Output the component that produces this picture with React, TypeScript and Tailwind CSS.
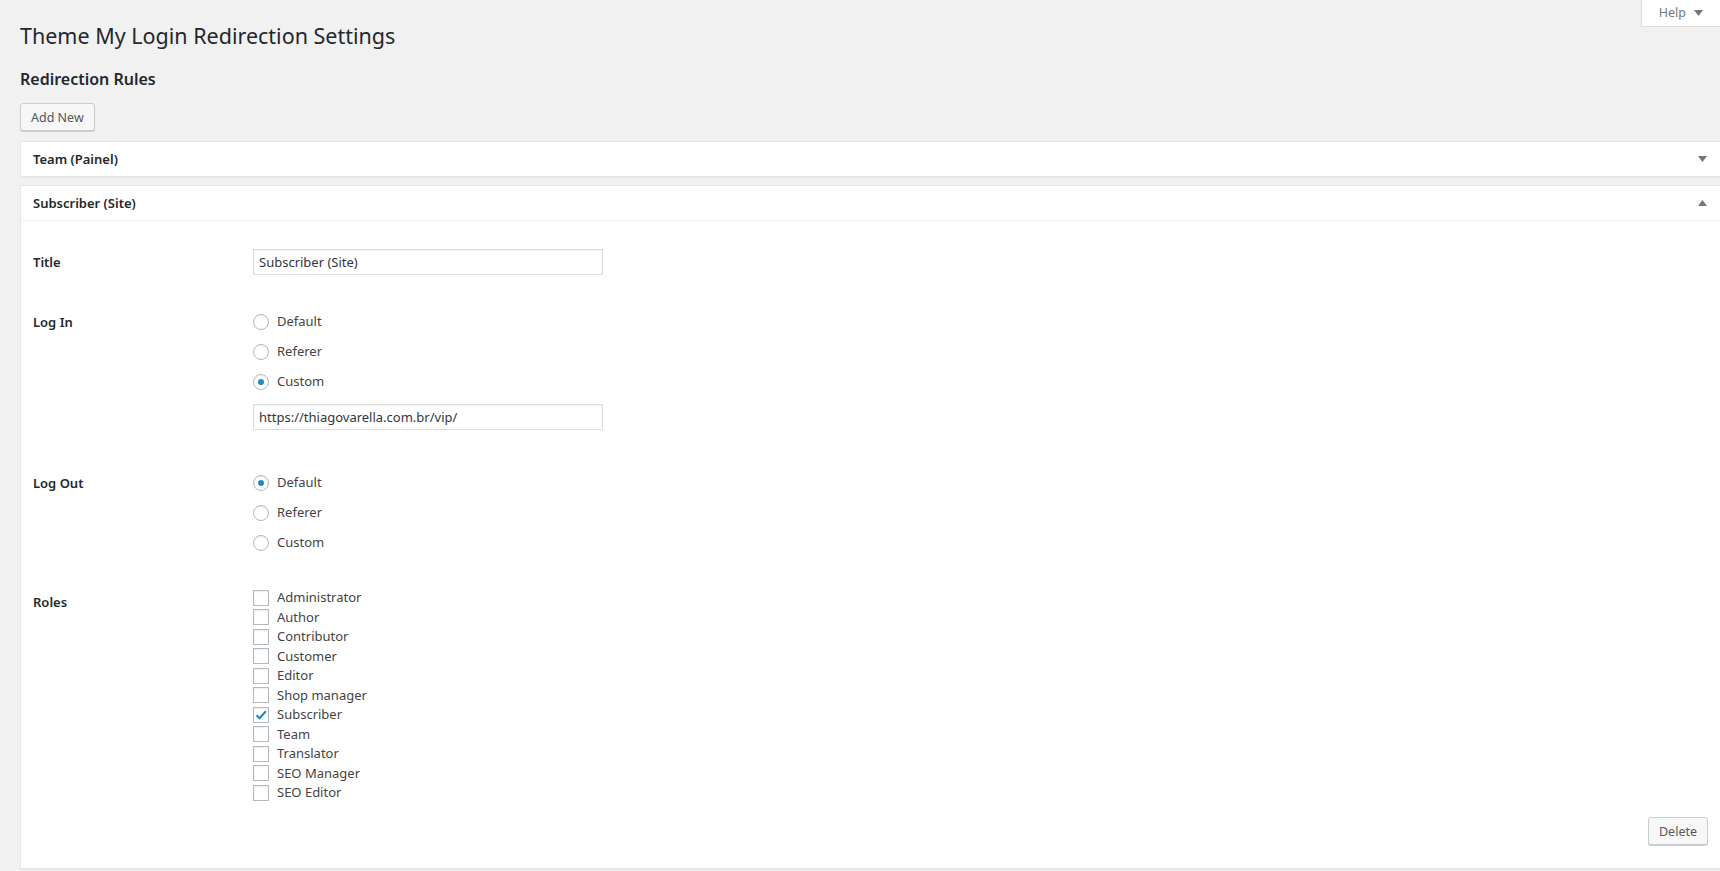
import React from "react";

const roles = [
  "Administrator",
  "Author",
  "Contributor",
  "Customer",
  "Editor",
  "Shop manager",
  "Subscriber",
  "Team",
  "Translator",
  "SEO Manager",
  "SEO Editor",
];

function Caret({ up = false }: { up?: boolean }) {
  return (
    <svg width="9" height="6" viewBox="0 0 9 6" aria-hidden>
      {up ? (
        <path d="M0 6 L4.5 0 L9 6 Z" fill="#72777c" />
      ) : (
        <path d="M0 0 L9 0 L4.5 6 Z" fill="#72777c" />
      )}
    </svg>
  );
}

function Radio({ label, checked = false }: { label: string; checked?: boolean }) {
  return (
    <label className="flex h-[30px] items-center gap-2">
      <span className="flex h-4 w-4 items-center justify-center rounded-full border border-[#b4b9be] bg-white shadow-[inset_0_1px_2px_rgba(0,0,0,0.07)]">
        {checked && <span className="h-[6px] w-[6px] rounded-full bg-[#1e8cbe]" />}
      </span>
      <span className="text-[13px] text-[#444]">{label}</span>
    </label>
  );
}

function Checkbox({ label, checked = false }: { label: string; checked?: boolean }) {
  return (
    <label className="flex h-[19.5px] items-center gap-2">
      <span className="flex h-4 w-4 items-center justify-center border border-[#b4b9be] bg-white shadow-[inset_0_1px_2px_rgba(0,0,0,0.07)]">
        {checked && (
          <svg width="14" height="14" viewBox="0 0 14 14" aria-hidden>
            <path
              d="M2.5 7.2 L5.6 10.2 L11.8 3.2"
              fill="none"
              stroke="#1e8cbe"
              strokeWidth="2.2"
            />
          </svg>
        )}
      </span>
      <span className="text-[13px] text-[#444]">{label}</span>
    </label>
  );
}

function TextField({ value }: { value: string }) {
  return (
    <input
      readOnly
      value={value}
      className="h-[26px] w-[350px] border border-[#ddd] bg-white px-[5px] text-[13px] text-[#32373c] shadow-[inset_0_1px_2px_rgba(0,0,0,0.07)] outline-none"
    />
  );
}

function WpButton({ children }: { children: React.ReactNode }) {
  return (
    <button className="h-7 rounded-[3px] border border-[#ccc] bg-[#f7f7f7] px-[10px] pt-px text-[12.5px] leading-[25px] text-[#555] shadow-[0_1px_0_#ccc]">
      {children}
    </button>
  );
}

export default function App() {
  return (
    <div className="relative min-h-[871px] bg-[#f1f1f1] font-['Noto_Sans',sans-serif] text-[13px] text-[#444]">
      {/* aba de ajuda */}
      <div className="absolute right-0 top-0 flex h-[27px] items-center gap-2 border-b border-l border-[#ddd] bg-white pl-[17px] pr-[17px] text-[12.5px] text-[#72777c]">
        <span>Help</span>
        <Caret />
      </div>

      <div className="pl-5">
        <h1 className="pt-[21px] text-[21.5px] leading-[29px] text-[#23282d]">
          Theme My Login Redirection Settings
        </h1>
        <h2 className="mt-[18px] text-[16px] font-semibold leading-[22px] text-[#23282d]">
          Redirection Rules
        </h2>
        <div className="mt-[13px]">
          <WpButton>Add New</WpButton>
        </div>

        <div className="mt-[10px] flex flex-col gap-2">
          {/* painel fechado */}
          <div className="border-y border-l border-[#e5e5e5] bg-white shadow-[0_1px_1px_rgba(0,0,0,0.04)]">
            <div className="flex h-[34px] items-center justify-between pl-3 pr-[13px]">
              <span className="pt-[2px] text-[13px] font-semibold text-[#23282d]">Team (Painel)</span>
              <Caret />
            </div>
          </div>

          {/* painel aberto */}
          <div className="border-y border-l border-[#e5e5e5] bg-white shadow-[0_1px_1px_rgba(0,0,0,0.04)]">
            <div className="flex h-[35px] items-center justify-between border-b border-[#eee] pl-3 pr-[13px]">
              <span className="pt-[2px] text-[13px] font-semibold text-[#23282d]">Subscriber (Site)</span>
              <Caret up />
            </div>

            <div className="pl-3 pr-3 pb-[23px]">
              <div className="flex pt-[28px]">
                <div className="w-[220px] text-[13px] font-semibold leading-[26px] text-[#23282d]">Title</div>
                <TextField value="Subscriber (Site)" />
              </div>

              <div className="mt-[31.5px] flex">
                <div className="w-[220px] text-[13px] font-semibold leading-[30px] text-[#23282d]">Log In</div>
                <div className="flex flex-col">
                  <Radio label="Default" />
                  <Radio label="Referer" />
                  <Radio label="Custom" checked />
                  <div className="mt-[7.5px]">
                    <TextField value="https://thiagovarella.com.br/vip/" />
                  </div>
                </div>
              </div>

              <div className="mt-[38px] flex">
                <div className="w-[220px] text-[13px] font-semibold leading-[30px] text-[#23282d]">Log Out</div>
                <div className="flex flex-col">
                  <Radio label="Default" checked />
                  <Radio label="Referer" />
                  <Radio label="Custom" />
                </div>
              </div>

              <div className="mt-[30px] flex">
                <div className="w-[220px] pt-[4px] text-[13px] font-semibold leading-[20px] text-[#23282d]">Roles</div>
                <div className="flex flex-col">
                  {roles.map((r) => (
                    <Checkbox key={r} label={r} checked={r === "Subscriber"} />
                  ))}
                </div>
              </div>

              <div className="mt-[14px] flex justify-end">
                <WpButton>Delete</WpButton>
              </div>
            </div>
          </div>
        </div>
      </div>
    </div>
  );
}
